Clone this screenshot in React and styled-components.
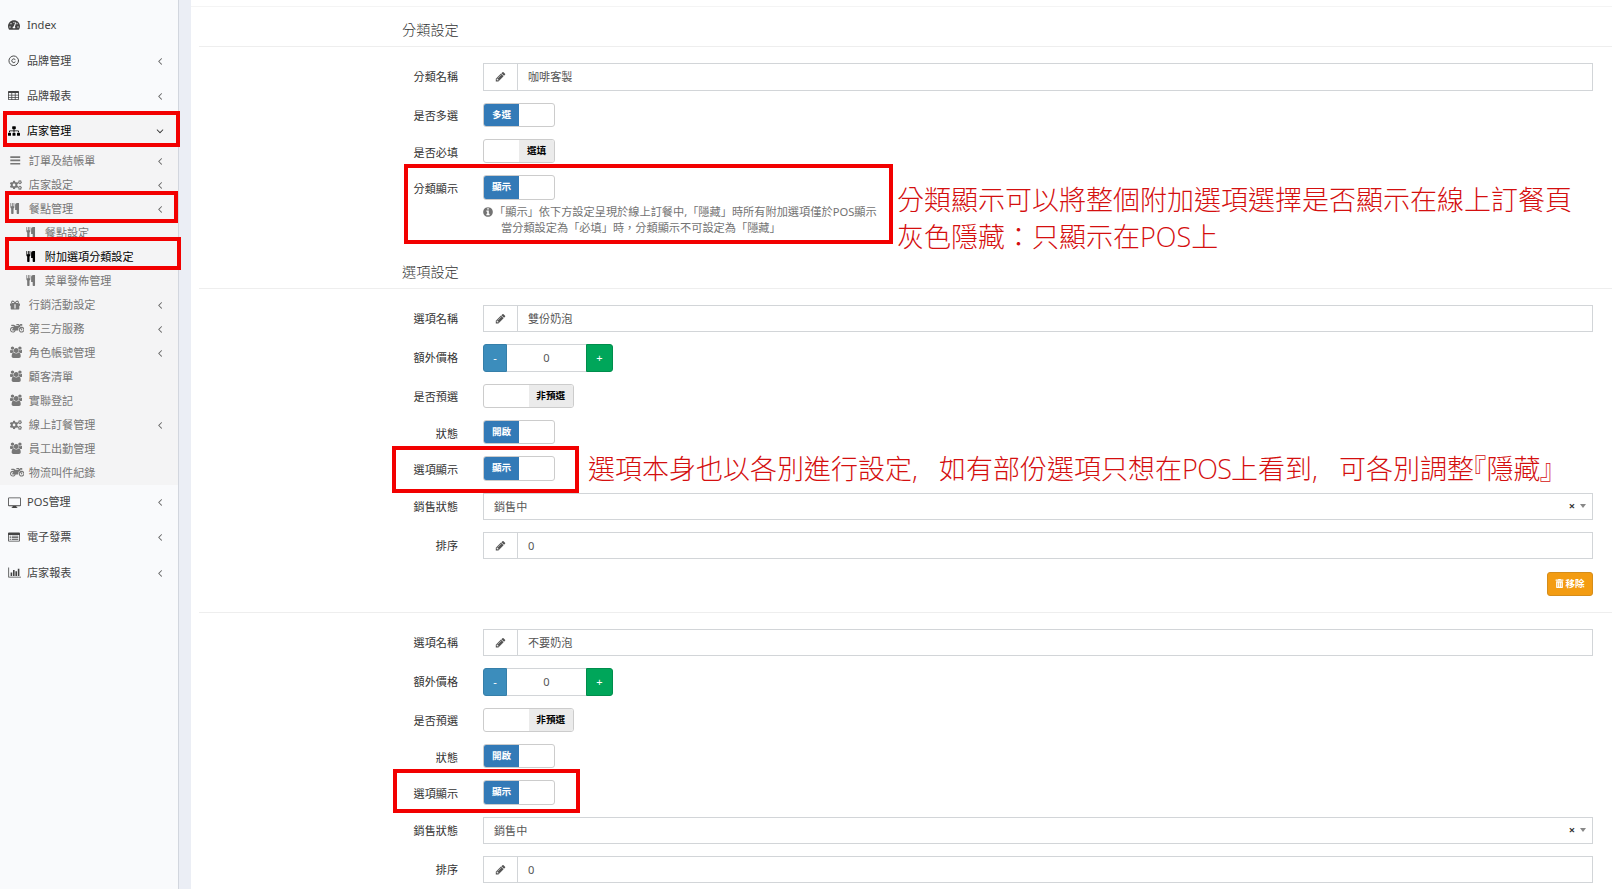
import React from 'react';
import styled, { createGlobalStyle, css } from 'styled-components';
import {
  FaTachometerAlt,
  FaSitemap,
  FaCogs,
  FaMotorcycle,
  FaTrashAlt
} from 'react-icons/fa';
import { Copyright } from 'lucide-react';

const GlobalStyle = createGlobalStyle`
  * {
    box-sizing: border-box;
  }

  body {
    margin: 0;
    background-color: #fff;
    color: #333;
    font-family: 'Noto Sans', 'Noto Sans CJK TC', sans-serif;
    font-size: 11.1px;
    line-height: 16px;
    overflow: hidden;
  }
`;

const StyledPage = styled.div`
  position: relative;
  display: flex;
  height: 889px;
  overflow: hidden;
`;

const StyledSidebar = styled.nav`
  flex: none;
  width: 179px;
  padding-top: 7.8px;
  background-color: #f9fafc;
  border-right: 1px solid #d2d6de;
`;

const StyledGutter = styled.div`
  flex: none;
  width: 12px;
  background-color: #ebeef5;
`;

const StyledMenuItem = styled.a`
  display: flex;
  align-items: center;
  height: 35.2px;
  padding: 0 12px 0 8px;
  color: ${({ $active }) => ($active ? '#000' : '#444')};
  background-color: ${({ $active }) => ($active ? '#f4f4f5' : 'transparent')};
  font-weight: 400;
`;

const StyledMenuIcon = styled.span`
  display: flex;
  align-items: center;
  flex: none;
  width: 19px;
  font-size: 12px;
`;

const StyledMenuText = styled.span`
  flex: 1;
  white-space: nowrap;
`;

const StyledArrow = styled.span`
  display: flex;
  color: ${({ $open }) => ($open ? '#333' : '#666')};
`;

const StyledSubmenu = styled.div`
  background-color: #f4f4f5;
`;

const StyledSubItem = styled(StyledMenuItem)`
  height: 24px;
  padding-left: ${({ $deep }) => ($deep ? '25.8px' : '9.8px')};
  color: ${({ $active }) => ($active ? '#000' : '#777')};
`;

const StyledMain = styled.main`
  flex: 1;
  min-width: 0;
  margin-top: 6px;
  padding: 12.6px 0 0 8px;
  border-top: 1px solid #f4f4f4;
`;

const StyledTitle = styled.h4`
  margin: 0 0 16.4px;
  padding: 0 0 6.4px 203px;
  border-bottom: 1px solid #eee;
  font-size: 14.2px;
  font-weight: 300;
  line-height: 20px;
`;

const StyledRow = styled.div`
  display: flex;
  align-items: flex-start;
  margin-bottom: 12px;
  padding-right: 19px;
`;

const StyledLabel = styled.label`
  flex: none;
  width: 259px;
  margin-right: 25px;
  padding-top: 5.8px;
  height: 24px;
  text-align: right;
`;

const StyledControl = styled.div`
  flex: 1;
  min-width: 0;
`;

const StyledInputGroup = styled.div`
  display: flex;
  height: 27.2px;
  border: 1px solid #d2d5d8;
  color: #555;
`;

const StyledAddon = styled.span`
  display: flex;
  align-items: center;
  justify-content: center;
  width: 34px;
  border-right: 1px solid #d2d5d8;
  font-size: 11.2px;
`;

const StyledValue = styled.span`
  flex: 1;
  padding-left: 10px;
  line-height: 25px;
`;

const StyledSelectTools = styled.span`
  display: flex;
  align-items: center;
  gap: 5px;
  padding-right: 6px;
  color: #333;
  font-weight: 700;
`;

const StyledCaret = styled.span`
  border: 3px solid transparent;
  border-top: 4px solid #888;
  border-bottom: 0;
`;

const StyledToggle = styled.div`
  display: flex;
  width: ${({ $wide }) => ($wide ? '91px' : '72px')};
  height: 24.4px;
  border: 1px solid #ccc;
  border-radius: 3px;
  overflow: hidden;
`;

const StyledToggleHalf = styled.span`
  width: 50%;
  padding-bottom: 1px;
  text-align: center;
  font-size: 9.6px;
  font-weight: 700;
  line-height: 21px;
  ${({ $tone }) =>
    $tone === 'on' &&
    css`
      color: #fff;
      background-color: #337ab7;
    `}
  ${({ $tone }) =>
    $tone === 'off' &&
    css`
      color: #000;
      background-color: #ebebeb;
    `}
`;

const StyledStepper = styled.div`
  display: flex;
  width: 130px;
  height: 27.2px;
`;

const StyledStepButton = styled.button`
  width: ${({ $plus }) => ($plus ? '27px' : '24px')};
  padding: 0;
  border: 1px solid ${({ $plus }) => ($plus ? '#008d4c' : '#367fa9')};
  border-radius: ${({ $plus }) => ($plus ? '0 3px 3px 0' : '3px 0 0 3px')};
  background-color: ${({ $plus }) => ($plus ? '#00a65a' : '#3c8dbc')};
  color: #fff;
  font: inherit;
`;

const StyledStepValue = styled.span`
  flex: 1;
  border: 1px solid #d2d5d8;
  border-width: 1px 0;
  color: #555;
  text-align: center;
  line-height: 25px;
`;

const StyledHelp = styled.p`
  display: flex;
  margin: 4.4px 0 0;
  color: #737373;
  font-size: 11.2px;
  white-space: nowrap;
`;

const StyledHelpIcon = styled.span`
  width: 11px;
  padding-top: 3px;
  line-height: 0;
`;

const StyledHelpLine = styled.span`
  display: block;
  padding-left: ${({ $indent }) => ($indent ? '7px' : '0')};
`;

const StyledOption = styled.section`
  padding-bottom: 4px;
  margin-bottom: 16.4px;
  border-bottom: 1px solid #eee;
`;

const StyledActions = styled.div`
  display: flex;
  justify-content: flex-end;
  padding: 0.4px 19px 12px 0;
`;

const StyledRemove = styled.button`
  display: flex;
  align-items: center;
  justify-content: center;
  gap: 1px;
  width: 46px;
  height: 24.2px;
  padding: 0;
  border: 1px solid #d58d1b;
  border-radius: 3px;
  background-color: #f39c12;
  color: #fff;
  font: inherit;
  font-size: 9.6px;
  font-weight: 700;
`;

// Red frame laid over the page, placed where the marked control is
const StyledMark = styled.div`
  position: absolute;
  left: ${({ $x }) => $x}px;
  top: ${({ $y }) => $y}px;
  width: ${({ $w }) => $w}px;
  height: ${({ $h }) => $h}px;
  border: 4px solid #f20000;
`;

const StyledNote = styled.div`
  position: absolute;
  left: ${({ $x }) => $x}px;
  top: ${({ $y }) => $y}px;
  color: #d40f0f;
  font-family: 'Open Sans', 'Noto Sans CJK TC', sans-serif;
  font-size: 27px;
  font-weight: 300;
  line-height: 36.5px;
  white-space: nowrap;
`;

const StyledPause = styled.span`
  display: inline-block;
  width: 27px;
`;

const StyledLatin = styled.span`
  display: inline-block;
  width: 49px;
  letter-spacing: -0.6px;
`;

const StyledQuote = styled.span`
  margin-left: -1px;
  font-feature-settings: 'halt' 1;
`;

const Svg = ({ d, size = '1em', box = '0 0 1792 1792' }) => (
  <svg width={size} height={size} viewBox={box} fill="currentColor">
    <path fillRule="evenodd" d={d} />
  </svg>
);

const PencilIcon = () => (
  <Svg d="M491 1536l91-91-235-235-91 91v107h128v128h107zm523-928q0-22-22-22-10 0-17 7l-542 542q-7 7-7 17 0 22 22 22 10 0 17-7l542-542q7-7 7-17zm-54-192l416 416-832 832h-416v-416zm683 96q0 53-37 90l-166 166-416-416 166-165q36-38 90-38 53 0 91 38l235 234q37 39 37 91z" />
);

const AngleIcon = ({ open }) => (
  <Svg
    size="12px"
    d={
      open
        ? 'M1395 736q0 13-10 23l-466 466q-10 10-23 10t-23-10l-466-466q-10-10-10-23t10-23l50-50q10-10 23-10t23 10l393 393 393-393q10-10 23-10t23 10l50 50q10 10 10 23z'
        : 'M1203 544q0 13-10 23l-393 393 393 393q10 10 10 23t-10 23l-50 50q-10 10-23 10t-23-10l-466-466q-10-10-10-23t10-23l466-466q10-10 23-10t23 10l50 50q10 10 10 23z'
    }
  />
);

const InfoIcon = () => (
  <Svg
    size="10px"
    box="100 100 1592 1592"
    d="M1152 1376v-160q0-14-9-23t-23-9h-96v-512q0-14-9-23t-23-9h-320q-14 0-23 9t-9 23v160q0 14 9 23t23 9h96v320h-96q-14 0-23 9t-9 23v160q0 14 9 23t23 9h448q14 0 23-9t9-23zm-128-896v-160q0-14-9-23t-23-9h-192q-14 0-23 9t-9 23v160q0 14 9 23t23 9h192q14 0 23-9t9-23zm640 416q0 209-103 385.5t-279.5 279.5-385.5 103-385.5-103-279.5-279.5-103-385.5 103-385.5 279.5-279.5 385.5-103 385.5 103 279.5 279.5 103 385.5z"
  />
);

const CutleryIcon = () => (
  <Svg
    size="11px"
    box="128 0 1792 1792"
    d="M832 64v640q0 61-35.5 111t-92.5 70v779q0 52-38 90t-90 38h-128q-52 0-90-38t-38-90v-779q-57-20-92.5-70t-35.5-111v-640q0-26 19-45t45-19 45 19 19 45v416q0 26 19 45t45 19 45-19 19-45v-416q0-26 19-45t45-19 45 19 19 45v416q0 26 19 45t45 19 45-19 19-45v-416q0-26 19-45t45-19 45 19 19 45zm768 0v1600q0 52-38 90t-90 38h-128q-52 0-90-38t-38-90v-512h-224q-13 0-22.5-9.5t-9.5-22.5v-800q0-132 94-226t226-94h256q26 0 45 19t19 45z"
  />
);

const UsersIcon = () => (
  <Svg
    size="12.4px"
    box="0 0 1920 1792"
    d="M593 896q-162 5-265 128h-134q-82 0-138-40.5t-56-118.5q0-353 124-353 6 0 43.5 21t97.5 42.5 119 21.5q67 0 133-23-5 37-5 66 0 139 81 256zm1071 637q0 120-73 189.5t-194 69.5h-874q-121 0-194-69.5t-73-189.5q0-53 3.5-103.5t14-109 26.5-108.5 43-97.5 62-81 85.5-53.5 111.5-20q10 0 43 21.5t73 48 107 48 135 21.5 135-21.5 107-48 73-48 43-21.5q61 0 111.5 20t85.5 53.5 62 81 43 97.5 26.5 108.5 14 109 3.5 103.5zm-1024-1277q0 106-75 181t-181 75-181-75-75-181 75-181 181-75 181 75 75 181zm704 384q0 159-112.5 271.5t-271.5 112.5-271.5-112.5-112.5-271.5 112.5-271.5 271.5-112.5 271.5 112.5 112.5 271.5zm576 225q0 78-56 118.5t-138 40.5h-134q-103-123-265-128 81-117 81-256 0-29-5-66 66 23 133 23 59 0 119-21.5t97.5-42.5 43.5-21q124 0 124 353zm-128-609q0 106-75 181t-181 75-181-75-75-181 75-181 181-75 181 75 75 181z"
  />
);

const GiftIcon = () => (
  <Svg size="10px" box="0 0 10 10" d="M0 3.4h1.6Q.9 2.8 1.1 1.9 1.5.6 2.9.6 4 .6 5 2.2 6 .6 7.1.6q1.4 0 1.8 1.3.2.9-.5 1.5H10v2.4h-.7v3q0 .6-.6.6H1.3q-.6 0-.6-.6v-3H0zM2.9 1.7q-.9 0-.9.7 0 .6.9.6h1.3q-.6-1.2-1.3-1.3zM7.1 1.7q.9 0 .9.7 0 .6-.9.6H5.8q.6-1.2 1.3-1.3zM4 4.2v4.4h.6V4.2zM5.4 4.2v4.4H6V4.2z" />
);

const TableIcon = () => (
  <Svg size="11px" box="0 0 11 11" d="M0.8 1h9.4q.8 0 .8.8v7.4q0 .8-.8.8H.8q-.8 0-.8-.8V1.8Q0 1 .8 1zM.8 3v1.7h2.6V3zM4.2 3v1.7h2.6V3zM7.6 3v1.7h2.6V3zM.8 5.4V7h2.6V5.4zM4.2 5.4V7h2.6V5.4zM7.6 5.4V7h2.6V5.4zM.8 7.7v1.5h2.6V7.7zM4.2 7.7v1.5h2.6V7.7zM7.6 7.7v1.5h2.6V7.7z" />
);

const BarsIcon = () => (
  <Svg size="11px" box="0 0 11 11" d="M0.3 1.3h9.9v1.7H0.3zM0.3 4.6h9.9v1.7H0.3zM0.3 7.9h9.9v1.7H0.3z" />
);

const DesktopIcon = () => (
  <Svg size="13px" box="0 0 13 13" d="M1 1.5h11q.9 0 .9.9v6.9q0 .9-.9.9H8.3l.3 1h.7v.8H3.7v-.8h.7l.3-1H1q-.9 0-.9-.9V2.4q0-.9.9-.9zM.9 2.3v7h11.2v-7z" />
);

const ListAltIcon = () => (
  <Svg size="12px" box="0 0 12 12" d="M.9 1.5h10.2q.9 0 .9.9v7.2q0 .9-.9.9H.9q-.9 0-.9-.9V2.4q0-.9.9-.9zM.8 4v5.7h10.4V4zM1.7 4.7h1.2v.9H1.7zM3.7 4.7h6.6v.9H3.7zM1.7 6.3h1.2v.9H1.7zM3.7 6.3h6.6v.9H3.7zM1.7 7.9h1.2v.9H1.7zM3.7 7.9h6.6v.9H3.7z" />
);

const ChartIcon = () => (
  <Svg size="13px" box="0 0 13 13" d="M0.3 1.5h.8v9.3H13v.8H0.3zM2.6 6.5h1.6V10H2.6zM5 4h1.6v6H5zM7.4 5.2H9V10H7.4zM9.8 2.8h1.6V10H9.8z" />
);

const topItems = [
  { text: 'Index', icon: <FaTachometerAlt /> },
  { text: '品牌管理', icon: <Copyright size={11.5} strokeWidth={2} />, arrow: true },
  { text: '品牌報表', icon: <TableIcon />, arrow: true },
  { text: '店家管理', icon: <FaSitemap />, arrow: true, active: true }
];

const subItems = [
  { text: '訂單及結帳單', icon: <BarsIcon />, arrow: true },
  { text: '店家設定', icon: <FaCogs />, arrow: true },
  { text: '餐點管理', icon: <CutleryIcon />, arrow: true },
  { text: '餐點設定', icon: <CutleryIcon />, deep: true },
  { text: '附加選項分類設定', icon: <CutleryIcon />, deep: true, active: true },
  { text: '菜單發佈管理', icon: <CutleryIcon />, deep: true },
  { text: '行銷活動設定', icon: <GiftIcon />, arrow: true },
  { text: '第三方服務', icon: <FaMotorcycle size={14.5} />, arrow: true },
  { text: '角色帳號管理', icon: <UsersIcon />, arrow: true },
  { text: '顧客清單', icon: <UsersIcon /> },
  { text: '實聯登記', icon: <UsersIcon /> },
  { text: '線上訂餐管理', icon: <FaCogs />, arrow: true },
  { text: '員工出勤管理', icon: <UsersIcon /> },
  { text: '物流叫件紀錄', icon: <FaMotorcycle size={14.5} /> }
];

const bottomItems = [
  { text: 'POS管理', icon: <DesktopIcon />, arrow: true },
  { text: '電子發票', icon: <ListAltIcon />, arrow: true },
  { text: '店家報表', icon: <ChartIcon />, arrow: true }
];

const MenuItem = ({ as: Item = StyledMenuItem, text, icon, arrow, active, deep }) => (
  <Item $active={active} $deep={deep}>
    <StyledMenuIcon>{icon}</StyledMenuIcon>
    <StyledMenuText>{text}</StyledMenuText>
    {arrow && (
      <StyledArrow $open={active}>
        <AngleIcon open={active} />
      </StyledArrow>
    )}
  </Item>
);

const Row = ({ label, children }) => (
  <StyledRow>
    <StyledLabel>{label}</StyledLabel>
    <StyledControl>{children}</StyledControl>
  </StyledRow>
);

const TextInput = ({ value }) => (
  <StyledInputGroup>
    <StyledAddon>
      <PencilIcon />
    </StyledAddon>
    <StyledValue>{value}</StyledValue>
  </StyledInputGroup>
);

const Toggle = ({ on, off, wide }) => (
  <StyledToggle $wide={wide}>
    <StyledToggleHalf $tone={on && 'on'}>{on}</StyledToggleHalf>
    <StyledToggleHalf $tone={off && 'off'}>{off}</StyledToggleHalf>
  </StyledToggle>
);

const Option = ({ name, removable }) => (
  <StyledOption>
    <Row label="選項名稱">
      <TextInput value={name} />
    </Row>
    <Row label="額外價格">
      <StyledStepper>
        <StyledStepButton>-</StyledStepButton>
        <StyledStepValue>0</StyledStepValue>
        <StyledStepButton $plus>+</StyledStepButton>
      </StyledStepper>
    </Row>
    <Row label="是否預選">
      <Toggle off="非預選" wide />
    </Row>
    <Row label="狀態">
      <Toggle on="開啟" />
    </Row>
    <Row label="選項顯示">
      <Toggle on="顯示" />
    </Row>
    <Row label="銷售狀態">
      <StyledInputGroup>
        <StyledValue>銷售中</StyledValue>
        <StyledSelectTools>
          ×
          <StyledCaret />
        </StyledSelectTools>
      </StyledInputGroup>
    </Row>
    <Row label="排序">
      <TextInput value="0" />
    </Row>
    {removable && (
      <StyledActions>
        <StyledRemove>
          <FaTrashAlt size={9} />
          移除
        </StyledRemove>
      </StyledActions>
    )}
  </StyledOption>
);

const StyledOptionTitle = styled(StyledTitle)`
  margin-top: 25.4px;
`;

const App = () => (
  <StyledPage>
    <GlobalStyle />
    <StyledSidebar>
      {topItems.map(item => (
        <MenuItem key={item.text} {...item} />
      ))}
      <StyledSubmenu>
        {subItems.map(item => (
          <MenuItem key={item.text} as={StyledSubItem} {...item} />
        ))}
      </StyledSubmenu>
      {bottomItems.map(item => (
        <MenuItem key={item.text} {...item} />
      ))}
    </StyledSidebar>
    <StyledGutter />
    <StyledMain>
      <StyledTitle>分類設定</StyledTitle>
      <Row label="分類名稱">
        <TextInput value="咖啡客製" />
      </Row>
      <Row label="是否多選">
        <Toggle on="多選" />
      </Row>
      <Row label="是否必填">
        <Toggle off="選填" />
      </Row>
      <Row label="分類顯示">
        <Toggle on="顯示" />
        <StyledHelp>
          <StyledHelpIcon>
            <InfoIcon />
          </StyledHelpIcon>
          <span>
            <StyledHelpLine>
              「顯示」依下方設定呈現於線上訂餐中,「隱藏」時所有附加選項僅於POS顯示
            </StyledHelpLine>
            <StyledHelpLine $indent>
              當分類設定為「必填」時{'\uff0c'}分類顯示不可設定為「隱藏」
            </StyledHelpLine>
          </span>
        </StyledHelp>
      </Row>
      <StyledOptionTitle>選項設定</StyledOptionTitle>
      <Option name="雙份奶泡" removable />
      <Option name="不要奶泡" />
    </StyledMain>

    <StyledMark $x={3} $y={111} $w={177} $h={36} />
    <StyledMark $x={5} $y={191} $w={173} $h={32} />
    <StyledMark $x={5} $y={237} $w={176} $h={33} />
    <StyledMark $x={404} $y={164} $w={489} $h={80} />
    <StyledMark $x={392} $y={446} $w={187} $h={47} />
    <StyledMark $x={393} $y={769} $w={187} $h={44} />
    <StyledNote $x={897} $y={182}>
      分類顯示可以將整個附加選項選擇是否顯示在線上訂餐頁
      <br />
      灰色隱藏{'\uff1a'}只顯示在POS上
    </StyledNote>
    <StyledNote $x={588} $y={451}>
      選項本身也以各別進行設定<StyledPause>,</StyledPause>
      如有部份選項只想在<StyledLatin>POS</StyledLatin>上看到
      <StyledPause>,</StyledPause>可各別調整
      <StyledQuote>『</StyledQuote>隱藏<StyledQuote>』</StyledQuote>
    </StyledNote>
  </StyledPage>
);

export default App;
